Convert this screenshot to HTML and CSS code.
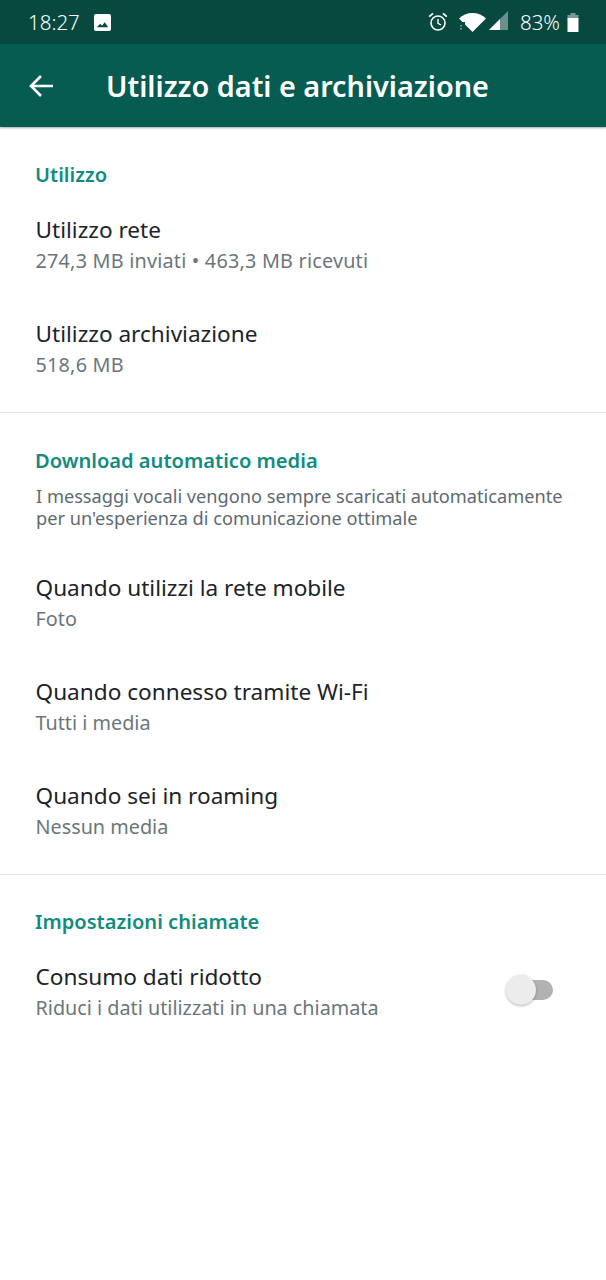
FILE: index.html
```html
<!DOCTYPE html>
<html lang="it">
<head>
  <meta charset="UTF-8">
  <meta name="viewport" content="width=device-width, initial-scale=1.0">
  <title>Utilizzo dati e archiviazione</title>
  <link rel="stylesheet" href="styles.css">
</head>
<body>

<div class="status-bar">
  <div class="status-left">
    <span class="clock">18:27</span>
    <svg class="icon-image" width="17" height="17" viewBox="0 0 18 18">
      <path fill="#fff" fill-rule="evenodd" d="M2 0h14a2 2 0 0 1 2 2v14a2 2 0 0 1-2 2H2a2 2 0 0 1-2-2V2a2 2 0 0 1 2-2zM3 14h12l-3.600-5.200-2.900 3.700-1.900-2.300z"/>
    </svg>
  </div>
  <div class="status-right">
    <svg class="icon-alarm" width="20" height="20" viewBox="0 0 20 20">
      <circle cx="10" cy="11" r="7" fill="none" stroke="#fff" stroke-width="1.600"/>
      <path d="M10 7v4.300l3 1.700" fill="none" stroke="#fff" stroke-width="1.400"/>
      <path d="M1.200 4.600 5 1.400M18.800 4.600 15 1.400" fill="none" stroke="#fff" stroke-width="1.800"/>
    </svg>
    <svg class="icon-wifi" width="27" height="19" viewBox="0 0 27 19">
      <path fill="#fff" d="M0 5.500C3.500 2 8 0 13.500 0S23.500 2 27 5.500L13.500 19z"/>
      <path fill="#07483f" d="M0 9h6v10H0z"/>
      <path fill="#fff" opacity="0.45" d="M1 12h2v1.500H1zM1 15h2v1.500H1z"/>
    </svg>
    <svg class="icon-signal" width="20" height="20" viewBox="0 0 20 20">
      <path fill="#fff" opacity="0.4" d="M19 0v19H0z"/>
      <path fill="#fff" d="M11 8v11H0z"/>
    </svg>
    <span class="battery-text">83%</span>
    <svg class="icon-battery" width="12" height="19" viewBox="0 0 12 19">
      <path fill="#fff" opacity="0.45" d="M3.500 0h5v2h3v4H.5V2h3z"/>
      <path fill="#fff" d="M.5 5h11v14H.5z"/>
    </svg>
  </div>
</div>

<div class="toolbar">
  <svg class="icon-back" width="26" height="26" viewBox="0 0 26 26">
    <path d="M25 13H3M13 3 3 13l10 10" fill="none" stroke="#fff" stroke-width="2.600"/>
  </svg>
  <h1 class="toolbar-title">Utilizzo dati e archiviazione</h1>
</div>

<div class="section">
  <div class="section-title">Utilizzo</div>
  <div class="row">
    <div class="row-title">Utilizzo rete</div>
    <div class="row-sub data">274,3 MB inviati • 463,3 MB ricevuti</div>
  </div>
  <div class="row">
    <div class="row-title">Utilizzo archiviazione</div>
    <div class="row-sub data">518,6 MB</div>
  </div>
</div>

<div class="section">
  <div class="section-title">Download automatico media</div>
  <p class="section-note">I messaggi vocali vengono sempre scaricati automaticamente<br>per un'esperienza di comunicazione ottimale</p>
  <div class="row">
    <div class="row-title">Quando utilizzi la rete mobile</div>
    <div class="row-sub">Foto</div>
  </div>
  <div class="row">
    <div class="row-title">Quando connesso tramite Wi-Fi</div>
    <div class="row-sub">Tutti i media</div>
  </div>
  <div class="row">
    <div class="row-title">Quando sei in roaming</div>
    <div class="row-sub">Nessun media</div>
  </div>
</div>

<div class="section last">
  <div class="section-title">Impostazioni chiamate</div>
  <div class="row row-toggle">
    <div>
      <div class="row-title">Consumo dati ridotto</div>
      <div class="row-sub">Riduci i dati utilizzati in una chiamata</div>
    </div>
    <div class="switch"><span class="switch-thumb"></span></div>
  </div>
</div>

</body>
</html>
```

FILE: styles.css
```css
body {
  font-family: "Noto Sans", Arial, sans-serif;
  margin: 0;
  background-color: #fff;
  color: #1c2429;
  overflow: hidden;
}

.status-bar {
  display: flex;
  justify-content: space-between;
  align-items: center;
  height: 44px;
  padding: 0 27px 0 28px;
  background-color: #07483f;
  color: #fff;
  font-size: 20.5px;
  font-weight: 300;
}

.status-left,
.status-right {
  display: flex;
  align-items: center;
}

.icon-image {
  margin-left: 14px;
}

.icon-alarm {
  margin-right: 1px;
}

.icon-wifi {
  margin-left: 10px;
}

.icon-signal {
  margin-left: 3px;
  margin-bottom: 2px;
}

.battery-text {
  margin-left: 11px;
}

.icon-battery {
  margin-left: 7px;
}

.toolbar {
  display: flex;
  align-items: center;
  height: 83px;
  padding-left: 28px;
  background-color: #065c51;
  box-shadow: 0 1px 2px rgba(0, 0, 0, 0.35);
}

.toolbar-title {
  margin: 0 0 0 52px;
  color: #fff;
  font-size: 28.8px;
  font-weight: 600;
}

.section {
  padding: 36px 0 11px;
  border-bottom: 1px solid #e4e4e4;
}

.section.last {
  padding-top: 35px;
  border-bottom: none;
}

.section-title {
  height: 24px;
  margin-bottom: 6px;
  padding: 0 35px;
  color: #128c7e;
  font-size: 20.1px;
  font-weight: 600;
  line-height: 24px;
}

.section-note {
  margin: 13px 0 21.5px;
  padding: 0 36px;
  color: #5e6a71;
  font-size: 18.2px;
  line-height: 21.5px;
}

.row {
  height: 61px;
  padding: 22px 35.5px 21.2px;
}

.row-toggle {
  display: flex;
  justify-content: space-between;
  align-items: center;
}

.row-title {
  font-size: 22.6px;
  line-height: 30px;
}

.row-sub {
  color: #6b767c;
  font-size: 19.8px;
  line-height: 31px;
}

.row-sub.data {
  letter-spacing: 0.22px;
}

.switch {
  position: relative;
  width: 32px;
  height: 20px;
  margin: 0 18px 6px 0;
  border-radius: 10px;
  background-color: #b2b2b2;
}

.switch-thumb {
  position: absolute;
  left: -15px;
  top: -5px;
  width: 30px;
  height: 30px;
  border-radius: 50%;
  background-color: #ececec;
  box-shadow: 0 1px 3px rgba(0, 0, 0, 0.3);
}
```
